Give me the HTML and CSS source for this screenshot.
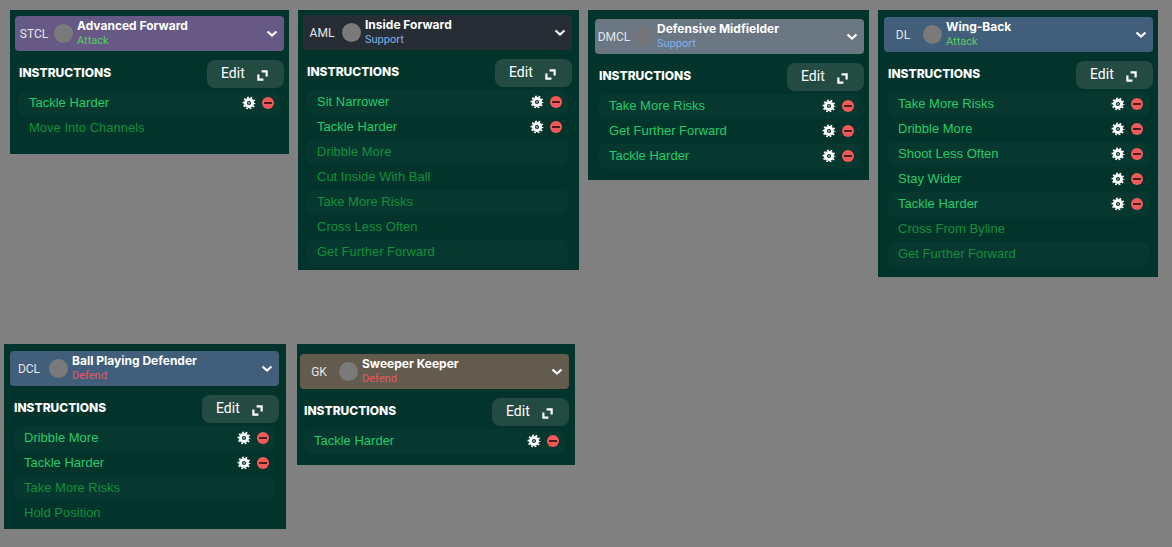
FILE: index.html
```html
<!DOCTYPE html>
<html lang="en">
<head>
    <meta charset="utf-8">
    <title>Player Instructions</title>
    <link rel="stylesheet" href="styles.css">
</head>
<body>
    <svg class="sprite" aria-hidden="true">
        <symbol id="chevron" viewBox="0 0 12 8">
            <path d="M1.5 1.5 L6 5.5 L10.5 1.5" fill="none" stroke="#fff" stroke-width="2.2"/>
        </symbol>
        <symbol id="expand" viewBox="0 0 12 12">
            <path d="M5 1.5 H10.5 V7 M1.5 5 V10.5 H7" fill="none" stroke="#fff" stroke-width="2.4"/>
        </symbol>
        <symbol id="gear" viewBox="0 0 14 14">
            <circle cx="7" cy="7" r="5.6" fill="none" stroke="#fff" stroke-width="1.6" stroke-dasharray="1.76 1.76" stroke-dashoffset="0.88"/>
            <circle cx="7" cy="7" r="3.6" fill="none" stroke="#fff" stroke-width="3"/>
            <circle cx="7" cy="7" r="0.8" fill="#fff"/>
        </symbol>
        <symbol id="minus" viewBox="0 0 12 12">
            <circle cx="6" cy="6" r="6" fill="#f25a5a"/>
            <rect x="2" y="5" width="8" height="2" rx="0.5" fill="#4a1d1c"/>
        </symbol>
    </svg>

    <main>
        <div class="row row-top">
            <section class="card stcl">
                <button type="button" class="role purple">
                    <span class="pos">STCL</span>
                    <span class="dot"></span>
                    <span class="info"><b>Advanced Forward</b><span class="attack">Attack</span></span>
                    <svg class="chevron"><use href="#chevron"/></svg>
                </button>
                <div class="bar">
                    <h2>INSTRUCTIONS</h2>
                    <button type="button" class="edit">Edit <svg><use href="#expand"/></svg></button>
                </div>
                <ul>
                    <li>Tackle Harder
                        <button type="button" aria-label="Settings"><svg class="gear"><use href="#gear"/></svg></button>
                        <button type="button" aria-label="Remove"><svg class="minus"><use href="#minus"/></svg></button>
                    </li>
                    <li class="fixed">Move Into Channels</li>
                </ul>
            </section>

            <section class="card aml">
                <button type="button" class="role dark">
                    <span class="pos">AML</span>
                    <span class="dot"></span>
                    <span class="info"><b>Inside Forward</b><span class="support">Support</span></span>
                    <svg class="chevron"><use href="#chevron"/></svg>
                </button>
                <div class="bar">
                    <h2>INSTRUCTIONS</h2>
                    <button type="button" class="edit">Edit <svg><use href="#expand"/></svg></button>
                </div>
                <ul>
                    <li>Sit Narrower
                        <button type="button" aria-label="Settings"><svg class="gear"><use href="#gear"/></svg></button>
                        <button type="button" aria-label="Remove"><svg class="minus"><use href="#minus"/></svg></button>
                    </li>
                    <li>Tackle Harder
                        <button type="button" aria-label="Settings"><svg class="gear"><use href="#gear"/></svg></button>
                        <button type="button" aria-label="Remove"><svg class="minus"><use href="#minus"/></svg></button>
                    </li>
                    <li class="fixed">Dribble More</li>
                    <li class="fixed">Cut Inside With Ball</li>
                    <li class="fixed">Take More Risks</li>
                    <li class="fixed">Cross Less Often</li>
                    <li class="fixed">Get Further Forward</li>
                </ul>
            </section>

            <section class="card dmcl">
                <button type="button" class="role grey">
                    <span class="pos">DMCL</span>
                    <span class="dot"></span>
                    <span class="info"><b>Defensive Midfielder</b><span class="support">Support</span></span>
                    <svg class="chevron"><use href="#chevron"/></svg>
                </button>
                <div class="bar">
                    <h2>INSTRUCTIONS</h2>
                    <button type="button" class="edit">Edit <svg><use href="#expand"/></svg></button>
                </div>
                <ul>
                    <li>Take More Risks
                        <button type="button" aria-label="Settings"><svg class="gear"><use href="#gear"/></svg></button>
                        <button type="button" aria-label="Remove"><svg class="minus"><use href="#minus"/></svg></button>
                    </li>
                    <li>Get Further Forward
                        <button type="button" aria-label="Settings"><svg class="gear"><use href="#gear"/></svg></button>
                        <button type="button" aria-label="Remove"><svg class="minus"><use href="#minus"/></svg></button>
                    </li>
                    <li>Tackle Harder
                        <button type="button" aria-label="Settings"><svg class="gear"><use href="#gear"/></svg></button>
                        <button type="button" aria-label="Remove"><svg class="minus"><use href="#minus"/></svg></button>
                    </li>
                </ul>
            </section>

            <section class="card dl">
                <button type="button" class="role blue">
                    <span class="pos">DL</span>
                    <span class="dot"></span>
                    <span class="info"><b>Wing-Back</b><span class="attack">Attack</span></span>
                    <svg class="chevron"><use href="#chevron"/></svg>
                </button>
                <div class="bar">
                    <h2>INSTRUCTIONS</h2>
                    <button type="button" class="edit">Edit <svg><use href="#expand"/></svg></button>
                </div>
                <ul>
                    <li>Take More Risks
                        <button type="button" aria-label="Settings"><svg class="gear"><use href="#gear"/></svg></button>
                        <button type="button" aria-label="Remove"><svg class="minus"><use href="#minus"/></svg></button>
                    </li>
                    <li>Dribble More
                        <button type="button" aria-label="Settings"><svg class="gear"><use href="#gear"/></svg></button>
                        <button type="button" aria-label="Remove"><svg class="minus"><use href="#minus"/></svg></button>
                    </li>
                    <li>Shoot Less Often
                        <button type="button" aria-label="Settings"><svg class="gear"><use href="#gear"/></svg></button>
                        <button type="button" aria-label="Remove"><svg class="minus"><use href="#minus"/></svg></button>
                    </li>
                    <li>Stay Wider
                        <button type="button" aria-label="Settings"><svg class="gear"><use href="#gear"/></svg></button>
                        <button type="button" aria-label="Remove"><svg class="minus"><use href="#minus"/></svg></button>
                    </li>
                    <li>Tackle Harder
                        <button type="button" aria-label="Settings"><svg class="gear"><use href="#gear"/></svg></button>
                        <button type="button" aria-label="Remove"><svg class="minus"><use href="#minus"/></svg></button>
                    </li>
                    <li class="fixed">Cross From Byline</li>
                    <li class="fixed">Get Further Forward</li>
                </ul>
            </section>
        </div>

        <div class="row row-bottom">
            <section class="card dcl">
                <button type="button" class="role blue">
                    <span class="pos">DCL</span>
                    <span class="dot"></span>
                    <span class="info"><b>Ball Playing Defender</b><span class="defend">Defend</span></span>
                    <svg class="chevron"><use href="#chevron"/></svg>
                </button>
                <div class="bar">
                    <h2>INSTRUCTIONS</h2>
                    <button type="button" class="edit">Edit <svg><use href="#expand"/></svg></button>
                </div>
                <ul>
                    <li>Dribble More
                        <button type="button" aria-label="Settings"><svg class="gear"><use href="#gear"/></svg></button>
                        <button type="button" aria-label="Remove"><svg class="minus"><use href="#minus"/></svg></button>
                    </li>
                    <li>Tackle Harder
                        <button type="button" aria-label="Settings"><svg class="gear"><use href="#gear"/></svg></button>
                        <button type="button" aria-label="Remove"><svg class="minus"><use href="#minus"/></svg></button>
                    </li>
                    <li class="fixed">Take More Risks</li>
                    <li class="fixed">Hold Position</li>
                </ul>
            </section>

            <section class="card gk">
                <button type="button" class="role brown">
                    <span class="pos">GK</span>
                    <span class="dot"></span>
                    <span class="info"><b>Sweeper Keeper</b><span class="defend">Defend</span></span>
                    <svg class="chevron"><use href="#chevron"/></svg>
                </button>
                <div class="bar">
                    <h2>INSTRUCTIONS</h2>
                    <button type="button" class="edit">Edit <svg><use href="#expand"/></svg></button>
                </div>
                <ul>
                    <li>Tackle Harder
                        <button type="button" aria-label="Settings"><svg class="gear"><use href="#gear"/></svg></button>
                        <button type="button" aria-label="Remove"><svg class="minus"><use href="#minus"/></svg></button>
                    </li>
                </ul>
            </section>
        </div>
    </main>
</body>
</html>
```

FILE: styles.css
```css
body{
    margin: 0;
    background: #808080;
    font-family: Roboto, "Liberation Sans", sans-serif;
}
button{
    font-family: inherit;
    color: inherit;
    border: none;
    padding: 0;
    background: none;
    cursor: pointer;
}
svg{
    display: block;
}
.sprite{
    display: none;
}
.row{
    display: grid;
    align-items: start;
}
.row-top{
    grid-template-columns: minmax(0, 279px) minmax(0, 281px) minmax(0, 281px) minmax(0, 280px);
    gap: 9px;
    padding: 10px 10px 0;
}
.row-bottom{
    grid-template-columns: minmax(0, 282px) minmax(0, 278px);
    gap: 11px;
    padding: 67px 4px 0;
}
.card{
    background: #02342b;
    color: white;
}
.stcl{
    padding: 6px 5px 13px;
}
.aml{
    padding: 5px 7px 5px 5px;
}
.dmcl{
    padding: 9px 5px 11px 7px;
}
.dl{
    padding: 7px 5px 10px 6px;
}
.dcl{
    padding: 7px 7px 3px 6px;
}
.gk{
    padding: 10px 6px 11px 3px;
}

/* role selector */
.role{
    display: flex;
    align-items: center;
    width: 100%;
    height: 35px;
    border-radius: 4px;
    text-align: left;
}
.purple{
    background: #675985;
}
.dark{
    background: #272d35;
}
.grey{
    background: #6b7683;
}
.blue{
    background: #415f7a;
}
.brown{
    background: #635b4e;
}
.pos{
    width: 38px;
    font-size: 12px;
    text-align: center;
    color: #e4e6ea;
}
.dot{
    width: 19px;
    height: 19px;
    margin: 0 4px 0 1px;
    border-radius: 50%;
    background: #7a7a7a;
}
.grey .dot{
    background: #737478;
}
.info{
    flex: 1;
    display: flex;
    flex-direction: column;
    font-size: 11px;
    line-height: 15px;
}
.info b{
    font-family: Inter, "Liberation Sans", sans-serif;
    font-size: 12px;
    line-height: 14px;
    white-space: nowrap;
}
.attack{
    color: #58cb62;
}
.support{
    color: #7fb2ee;
}
.defend{
    color: #e8565c;
}
.chevron{
    width: 12px;
    height: 8px;
    margin-right: 6px;
}

/* title and edit */
.bar{
    display: flex;
    justify-content: space-between;
    margin-top: 9px;
    padding-left: 4px;
}
h2{
    margin: 0;
    font: 800 12px/26px Inter, "Liberation Sans", sans-serif;
}
.edit{
    display: flex;
    justify-content: space-between;
    align-items: center;
    width: 77px;
    height: 28px;
    padding: 0 16px 2px 14px;
    border-radius: 8px;
    background: #234b42;
    font-size: 14px;
}
.edit svg{
    width: 11px;
    height: 11px;
    margin-top: 4px;
}

/* instructions */
ul{
    list-style: none;
    margin: 3px 4px 0;
    padding: 0;
}
li{
    box-sizing: border-box;
    display: flex;
    align-items: center;
    gap: 6px;
    height: 25px;
    padding: 0 6px 2px 10px;
    border-radius: 6px;
    font: 13px/23px "Liberation Sans", sans-serif;
    color: #25cb6a;
}
li:nth-child(odd){
    background: #06382f;
}
li button:first-of-type{
    margin-left: auto;
}
.fixed{
    color: #128f3b;
}
.gear{
    width: 14px;
    height: 14px;
}
.minus{
    width: 12px;
    height: 12px;
}
```
